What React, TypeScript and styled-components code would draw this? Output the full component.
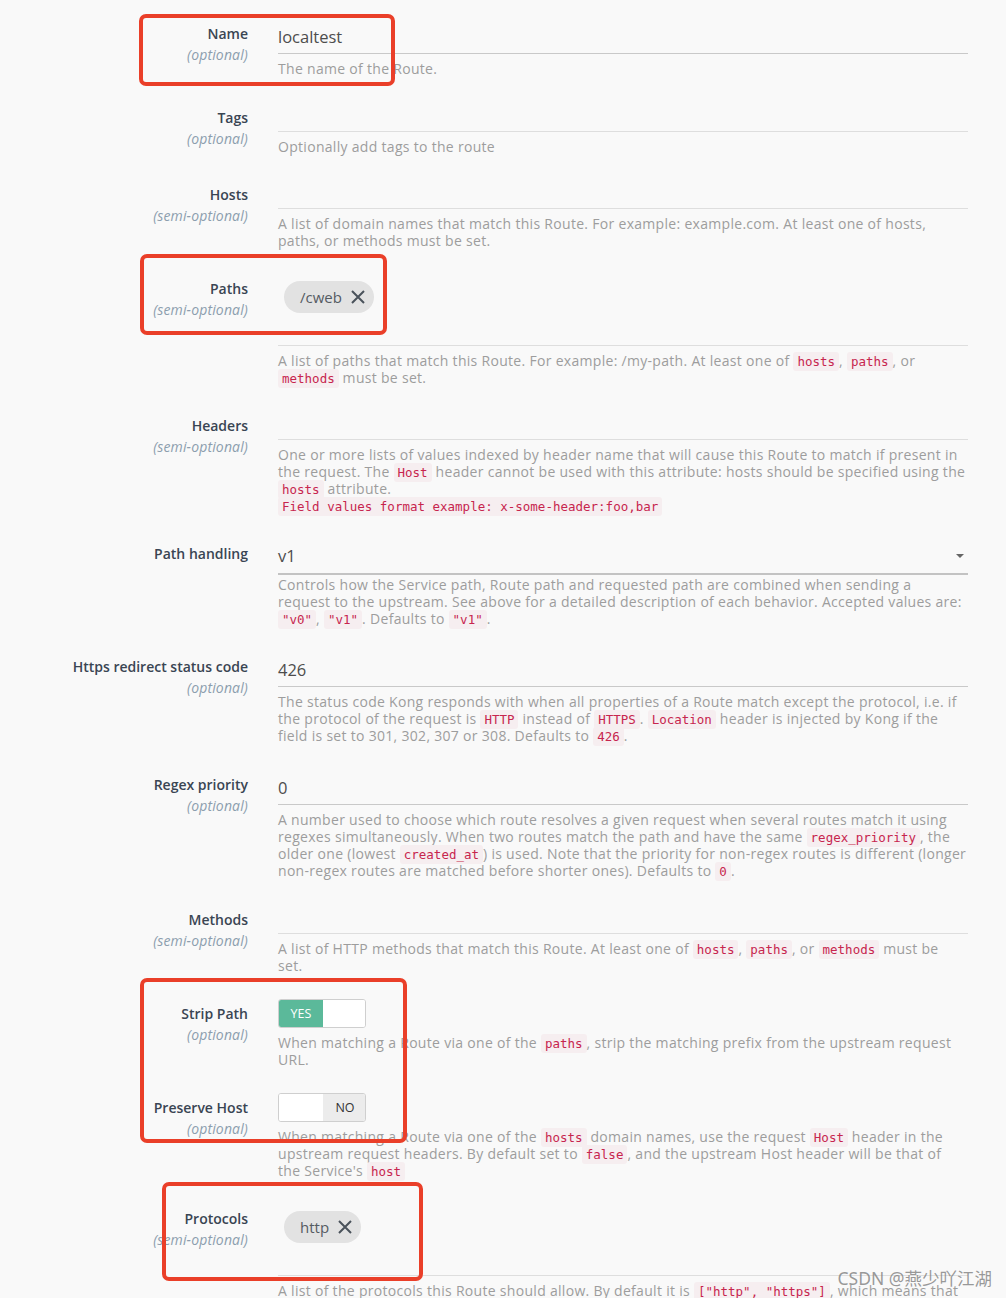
import React from "react";
import styled, { createGlobalStyle } from "styled-components";

const GlobalStyle = createGlobalStyle`
  html, body {
    margin: 0;
    padding: 0;
    background: #f9f9f9;
  }
  body {
    font-family: "Open Sans", "Noto Sans", sans-serif;
    color: #4a4a4a;
  }
`;

const Page = styled.div`
  position: relative;
  width: 1006px;
  height: 1298px;
  overflow: hidden;
  background: #f9f9f9;
  padding-top: 20.5px;
  box-sizing: border-box;
`;

const Row = styled.div<{ $gap?: number }>`
  display: grid;
  grid-template-columns: 248px 690px;
  column-gap: 30px;
  margin-bottom: ${(p) => (p.$gap ?? 27)}px;
`;

const LabelCol = styled.div`
  text-align: right;
  padding-top: 2px;
`;

const Label = styled.div`
  font-size: 14px;
  line-height: 21px;
  font-weight: 600;
  color: #3a4553;
`;

const Optional = styled.div`
  font-size: 14px;
  line-height: 21px;
  font-style: italic;
  letter-spacing: 0.15px;
  color: #8c9eae;
`;

const ContentCol = styled.div`
  display: flex;
  flex-direction: column;
`;

const TextInput = styled.div`
  height: 33px;
  border-bottom: 1px solid #c9c9c9;
  font-size: 16.5px;
  line-height: 32px;
  color: #4d4d4d;
  box-sizing: border-box;
`;

const TagInput = styled.div<{ $tall?: boolean }>`
  height: ${(p) => (p.$tall ? 70 : 27)}px;
  border-bottom: 1px solid #dedede;
  padding: 5px 0 0 6px;
  box-sizing: border-box;
  display: flex;
  align-items: flex-start;
`;

const Chip = styled.div`
  display: inline-flex;
  align-items: center;
  gap: 8px;
  height: 32px;
  padding: 0 8px 0 16px;
  border-radius: 16px;
  background: #e2e2e2;
  font-size: 15px;
  color: #555b62;
`;

const SelectBox = styled.div`
  position: relative;
  height: 34px;
  border-bottom: 2px solid #c3c3c3;
  font-size: 16.5px;
  line-height: 30px;
  color: #4d4d4d;
  box-sizing: border-box;
`;

const Caret = styled.span`
  position: absolute;
  right: 4px;
  top: 13px;
  width: 0;
  height: 0;
  border-left: 4px solid transparent;
  border-right: 4px solid transparent;
  border-top: 4px solid #666;
`;

const Help = styled.div<{ $flush?: boolean }>`
  margin-top: ${(p) => (p.$flush ? 1 : 6)}px;
  font-size: 14px;
  line-height: 17px;
  letter-spacing: 0.3px;
  color: #9d9d9d;
  font-weight: 400;
`;

const Code = styled.code`
  font-family: "DejaVu Sans Mono", "Liberation Mono", monospace;
  font-size: 12.5px;
  line-height: 1;
  letter-spacing: 0;
  color: #c7254e;
  background: #f6eef0;
  padding: 2px 4px;
  border-radius: 3px;
`;

const Toggle = styled.div`
  display: grid;
  grid-template-columns: 44px 44px;
  width: 88px;
  height: 29px;
  margin-top: -2px;
  border: 1px solid #cfcfcf;
  border-radius: 3px;
  overflow: hidden;
  box-sizing: border-box;
  background: #fff;
`;

const ToggleHalf = styled.div<{ $on?: boolean; $off?: boolean }>`
  display: flex;
  align-items: center;
  justify-content: center;
  font-size: 12.5px;
  color: ${(p) => (p.$on ? "#fff" : "#333")};
  background: ${(p) => (p.$on ? "#5bb99a" : p.$off ? "#ececec" : "#fff")};
`;

const Mark = styled.div<{ $x: number; $y: number; $w: number; $h: number }>`
  position: absolute;
  left: ${(p) => p.$x}px;
  top: ${(p) => p.$y}px;
  width: ${(p) => p.$w}px;
  height: ${(p) => p.$h}px;
  border: 4px solid #ea3f29;
  border-radius: 7px;
  box-sizing: border-box;
  pointer-events: none;
`;

const Watermark = styled.div`
  position: absolute;
  right: 14px;
  bottom: 8px;
  font-family: "Noto Sans", "Noto Sans CJK SC", sans-serif;
  font-size: 17.5px;
  color: rgba(120, 120, 120, 0.75);
`;

const CloseIcon = () => (
  <svg width="16" height="16" viewBox="0 0 16 16" aria-hidden>
    <path d="M2 2 L14 14 M14 2 L2 14" stroke="#4a525b" strokeWidth="2" fill="none" />
  </svg>
);

const FieldLabel = ({ name, hint }: { name: string; hint?: string }) => (
  <LabelCol>
    <Label>{name}</Label>
    {hint && <Optional>({hint})</Optional>}
  </LabelCol>
);

export default function App() {
  return (
    <Page>
      <GlobalStyle />

      <Row $gap={28}>
        <FieldLabel name="Name" hint="optional" />
        <ContentCol>
          <TextInput>localtest</TextInput>
          <Help>The name of the Route.</Help>
        </ContentCol>
      </Row>

      <Row>
        <FieldLabel name="Tags" hint="optional" />
        <ContentCol>
          <TagInput />
          <Help>Optionally add tags to the route</Help>
        </ContentCol>
      </Row>

      <Row>
        <FieldLabel name="Hosts" hint="semi-optional" />
        <ContentCol>
          <TagInput />
          <Help>
            A list of domain names that match this Route. For example: example.com. At least one of hosts,
            <br />
            paths, or methods must be set.
          </Help>
        </ContentCol>
      </Row>

      <Row>
        <FieldLabel name="Paths" hint="semi-optional" />
        <ContentCol>
          <TagInput $tall>
            <Chip>
              /cweb <CloseIcon />
            </Chip>
          </TagInput>
          <Help>
            A list of paths that match this Route. For example: /my-path. At least one of <Code>hosts</Code>,{" "}
            <Code>paths</Code>, or
            <br />
            <Code>methods</Code> must be set.
          </Help>
        </ContentCol>
      </Row>

      <Row>
        <FieldLabel name="Headers" hint="semi-optional" />
        <ContentCol>
          <TagInput />
          <Help>
            One or more lists of values indexed by header name that will cause this Route to match if present in
            <br />
            the request. The <Code>Host</Code> header cannot be used with this attribute: hosts should be specified using the
            <br />
            <Code>hosts</Code> attribute.
            <br />
            <Code>Field values format example: x-some-header:foo,bar</Code>
          </Help>
        </ContentCol>
      </Row>

      <Row>
        <FieldLabel name="Path handling" />
        <ContentCol>
          <SelectBox>
            v1
            <Caret />
          </SelectBox>
          <Help $flush>
            Controls how the Service path, Route path and requested path are combined when sending a
            <br />
            request to the upstream. See above for a detailed description of each behavior. Accepted values are:
            <br />
            <Code>"v0"</Code>, <Code>"v1"</Code>. Defaults to <Code>"v1"</Code>.
          </Help>
        </ContentCol>
      </Row>

      <Row $gap={28}>
        <FieldLabel name="Https redirect status code" hint="optional" />
        <ContentCol>
          <TextInput>426</TextInput>
          <Help>
            The status code Kong responds with when all properties of a Route match except the protocol, i.e. if
            <br />
            the protocol of the request is <Code>HTTP</Code> instead of <Code>HTTPS</Code>. <Code>Location</Code> header
            is injected by Kong if the
            <br />
            field is set to 301, 302, 307 or 308. Defaults to <Code>426</Code>.
          </Help>
        </ContentCol>
      </Row>

      <Row $gap={28}>
        <FieldLabel name="Regex priority" hint="optional" />
        <ContentCol>
          <TextInput>0</TextInput>
          <Help>
            A number used to choose which route resolves a given request when several routes match it using
            <br />
            regexes simultaneously. When two routes match the path and have the same <Code>regex_priority</Code>, the
            <br />
            older one (lowest <Code>created_at</Code>) is used. Note that the priority for non-regex routes is different
            (longer
            <br />
            non-regex routes are matched before shorter ones). Defaults to <Code>0</Code>.
          </Help>
        </ContentCol>
      </Row>

      <Row>
        <FieldLabel name="Methods" hint="semi-optional" />
        <ContentCol>
          <TagInput />
          <Help>
            A list of HTTP methods that match this Route. At least one of <Code>hosts</Code>, <Code>paths</Code>, or{" "}
            <Code>methods</Code> must be
            <br />
            set.
          </Help>
        </ContentCol>
      </Row>

      <Row>
        <FieldLabel name="Strip Path" hint="optional" />
        <ContentCol>
          <Toggle>
            <ToggleHalf $on>YES</ToggleHalf>
            <ToggleHalf />
          </Toggle>
          <Help>
            When matching a Route via one of the <Code>paths</Code>, strip the matching prefix from the upstream request
            <br />
            URL.
          </Help>
        </ContentCol>
      </Row>

      <Row>
        <FieldLabel name="Preserve Host" hint="optional" />
        <ContentCol>
          <Toggle>
            <ToggleHalf />
            <ToggleHalf $off>NO</ToggleHalf>
          </Toggle>
          <Help>
            When matching a Route via one of the <Code>hosts</Code> domain names, use the request <Code>Host</Code> header in
            the
            <br />
            upstream request headers. By default set to <Code>false</Code>, and the upstream Host header will be that of
            <br />
            the Service's <Code>host</Code>
          </Help>
        </ContentCol>
      </Row>

      <Row>
        <FieldLabel name="Protocols" hint="semi-optional" />
        <ContentCol>
          <TagInput $tall>
            <Chip>
              http <CloseIcon />
            </Chip>
          </TagInput>
          <Help>
            A list of the protocols this Route should allow. By default it is <Code>["http", "https"]</Code>, which means
            that
          </Help>
        </ContentCol>
      </Row>

      <Mark $x={139} $y={14} $w={256} $h={72} />
      <Mark $x={140} $y={254} $w={247} $h={81} />
      <Mark $x={140} $y={978} $w={267} $h={165} />
      <Mark $x={162} $y={1182} $w={261} $h={99} />
      <Watermark>CSDN @燕少吖江湖</Watermark>
    </Page>
  );
}
